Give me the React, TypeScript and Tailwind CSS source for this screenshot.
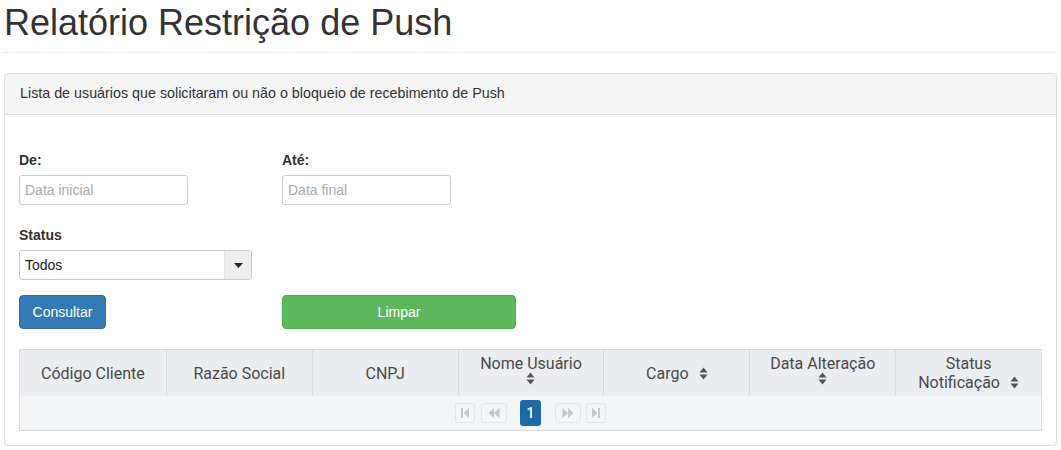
const columns = [
  { label: "Código Cliente", sort: "none" },
  { label: "Razão Social", sort: "none" },
  { label: "CNPJ", sort: "none" },
  { label: "Nome Usuário", sort: "below" },
  { label: "Cargo", sort: "inline" },
  { label: "Data Alteração", sort: "below" },
  { label: "Status Notificação", sort: "inline" },
];

function SortIcon() {
  return (
    <svg width="9" height="13" viewBox="0 0 9 13" className="inline-block">
      <path d="M4.5 0.5 L8.5 5.5 L0.5 5.5 Z" fill="#555" />
      <path d="M4.5 12.5 L8.5 7.5 L0.5 7.5 Z" fill="#555" />
    </svg>
  );
}

function PagerIcon({ kind }: { kind: "first" | "prev" | "next" | "last" }) {
  const fill = "#c4c6c9";
  return (
    <svg width="12" height="12" viewBox="0 0 12 12">
      {kind === "first" && (
        <>
          <rect x="2" y="1" width="2" height="10" fill={fill} />
          <path d="M10 1 L10 11 L4.5 6 Z" fill={fill} />
        </>
      )}
      {kind === "prev" && (
        <>
          <path d="M6 1 L6 11 L0.5 6 Z" fill={fill} />
          <path d="M11.5 1 L11.5 11 L6 6 Z" fill={fill} />
        </>
      )}
      {kind === "next" && (
        <>
          <path d="M0.5 1 L0.5 11 L6 6 Z" fill={fill} />
          <path d="M6 1 L6 11 L11.5 6 Z" fill={fill} />
        </>
      )}
      {kind === "last" && (
        <>
          <path d="M2 1 L2 11 L7.5 6 Z" fill={fill} />
          <rect x="8" y="1" width="2" height="10" fill={fill} />
        </>
      )}
    </svg>
  );
}

function PagerButton({ kind, w }: { kind: "first" | "prev" | "next" | "last"; w: string }) {
  return (
    <div className={`flex h-[20px] ${w} items-center justify-center rounded-[3px] border border-[#e3e5e8] bg-[#f4f5f7]`}>
      <PagerIcon kind={kind} />
    </div>
  );
}

export default function App() {
  return (
    <div className="w-[1061px] bg-white px-[4px] font-['Liberation_Sans',Arial,sans-serif] text-[14px] text-[#333]">
      {/* Page header */}
      <div className="border-b border-[#eee] pb-[7px] pt-[1px]">
        <h1 className="text-[36px] leading-[44px] text-[#333]">Relatório Restrição de Push</h1>
      </div>

      {/* Panel */}
      <div className="mt-[20px] rounded-[4px] border border-[#ddd] shadow-[0_1px_1px_rgba(0,0,0,0.05)]">
        <div className="flex h-[41px] items-center rounded-t-[4px] border-b border-[#ddd] bg-[#f5f5f5] px-[15px] text-[14.3px]">
          Lista de usuários que solicitaram ou não o bloqueio de recebimento de Push
        </div>

        <div className="px-[14px] pb-[14px] pt-[35px]">
          {/* Dates */}
          <div className="flex gap-[94px]">
            <div className="flex flex-col">
              <label className="mb-[5px] font-bold leading-[20px]">De:</label>
              <input
                placeholder="Data inicial"
                className="h-[30px] w-[169px] rounded-[3px] border border-[#ccc] px-[5px] text-[14px] placeholder:text-[#aaa] focus:outline-none"
              />
            </div>
            <div className="flex flex-col">
              <label className="mb-[5px] font-bold leading-[20px]">Até:</label>
              <input
                placeholder="Data final"
                className="h-[30px] w-[169px] rounded-[3px] border border-[#ccc] px-[5px] text-[14px] placeholder:text-[#aaa] focus:outline-none"
              />
            </div>
          </div>

          {/* Status */}
          <div className="mt-[20px] flex flex-col">
            <label className="mb-[5px] font-bold leading-[20px]">Status</label>
            <div className="flex h-[30px] w-[233px] overflow-hidden rounded-[3px] border border-[#ccc]">
              <div className="flex flex-1 items-center px-[5px] text-[#222]">Todos</div>
              <div className="flex w-[27px] items-center justify-center border-l border-[#e5e5e5] bg-[#eee]">
                <svg width="9" height="5" viewBox="0 0 9 5">
                  <path d="M0 0 L9 0 L4.5 5 Z" fill="#222" />
                </svg>
              </div>
            </div>
          </div>

          {/* Buttons */}
          <div className="mt-[15px] flex gap-[176px]">
            <button className="h-[34px] w-[87px] rounded-[4px] border border-[#2e6da4] bg-[#337ab7] text-white">
              Consultar
            </button>
            <button className="h-[34px] w-[234px] rounded-[4px] border border-[#4cae4c] bg-[#5cb85c] text-white">
              Limpar
            </button>
          </div>

          {/* Table */}
          <div className="mt-[20px] border border-[#d8dadd] font-['Roboto',sans-serif]">
            <div className="grid h-[46px] grid-cols-7 bg-[#ebedf0] text-[16px] text-[#4a4a4a]">
              {columns.map((c, i) => (
                <div
                  key={c.label}
                  className={`flex flex-col items-center justify-center text-center leading-[19px] ${i > 0 ? "border-l border-[#d8dadd]" : ""}`}
                >
                  {c.sort === "none" && <span>{c.label}</span>}
                  {c.sort === "below" && (
                    <>
                      <span className="-mt-[6px]">{c.label}</span>
                      <span className="-mt-[3px] leading-none">
                        <SortIcon />
                      </span>
                    </>
                  )}
                  {c.sort === "inline" && c.label === "Cargo" && (
                    <span className="flex items-center gap-[10px]">
                      {c.label}
                      <SortIcon />
                    </span>
                  )}
                  {c.sort === "inline" && c.label !== "Cargo" && (
                    <span>
                      Status
                      <br />
                      <span className="inline-flex items-center gap-[10px]">
                        Notificação
                        <SortIcon />
                      </span>
                    </span>
                  )}
                </div>
              ))}
            </div>
            <div className="flex h-[34px] items-center justify-center bg-[#f4f5f7]">
              <div className="flex items-center">
                <PagerButton kind="first" w="w-[20px]" />
                <div className="ml-[6px]">
                  <PagerButton kind="prev" w="w-[26px]" />
                </div>
                <div className="ml-[13px] flex h-[26px] w-[21px] items-center justify-center rounded-[3px] bg-[#1b6aa5] text-[14px] font-medium text-white">
                  1
                </div>
                <div className="ml-[14px]">
                  <PagerButton kind="next" w="w-[26px]" />
                </div>
                <div className="ml-[5px]">
                  <PagerButton kind="last" w="w-[20px]" />
                </div>
              </div>
            </div>
          </div>
        </div>
      </div>
    </div>
  );
}
